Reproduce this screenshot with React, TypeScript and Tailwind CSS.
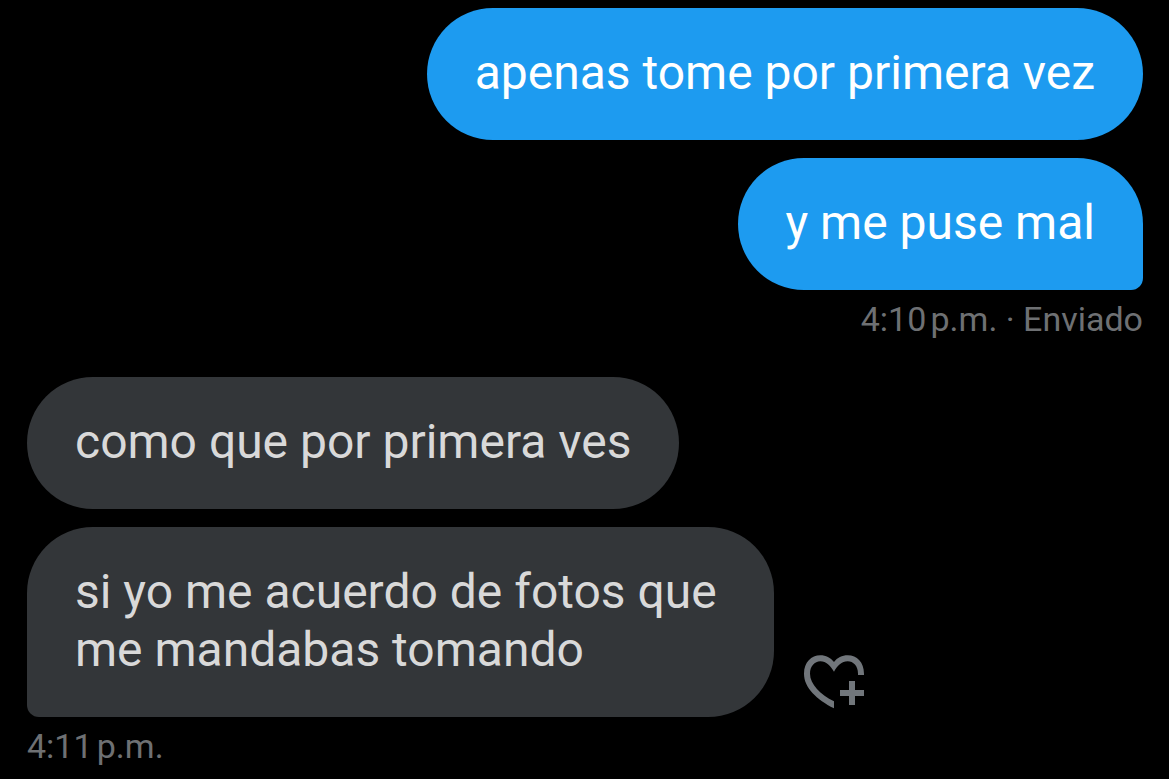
import clsx from "clsx";

const HeartPlusIcon = () => (
  <svg viewBox="42 42 180 162" className="w-[60px] h-[54px] fill-current" aria-hidden="true">
    <path d="M222 102H204V98C204 75 190 61 173 61C155 61 142 75 132 92C121 75 109 61 91 61C74 61 60 76 60 98C60 130 92 160 132 181V202C80 175 42 140 42 98C42 64 64 43 91 43C108 43 121 50 132 63C142 50 156 43 173 43C201 43 222 64 222 98Z" />
    <path d="M177 120H195V147H222V165H195V192H177V165H150V147H177Z" />
  </svg>
);

const Bubble = ({ text, sent = false, last = false }: { text: string; sent?: boolean; last?: boolean }) => (
  <p
    className={clsx(
      "max-w-[747px] rounded-[66px] px-12 pt-9 pb-[38px] text-[48px] leading-[58px]",
      sent ? "bg-[#1d9bf0] text-white" : "bg-[#333639] text-[#d9d9d9]",
      last && (sent ? "rounded-br-xl" : "rounded-bl-xl")
    )}
  >
    {text}
  </p>
);

const App = () => {
  return (
    <main className="min-h-screen bg-black pt-2 pl-[27px] pr-[26px] font-['Roboto',sans-serif]">
      <section className="flex flex-col items-end gap-[18px]">
        <Bubble sent text="apenas tome por primera vez" />
        <Bubble sent last text="y me puse mal" />
      </section>
      <p className="mt-2 text-right text-[34px] leading-[42px] text-[#6e7073]">
        {"4:10\u202fp.m. · Enviado"}
      </p>

      <section className="mt-[37px] flex flex-col items-start gap-[18px]">
        <Bubble text="como que por primera ves" />
        <div className="flex items-end gap-[30px]">
          <Bubble last text="si yo me acuerdo de fotos que me mandabas tomando" />
          <button type="button" aria-label="Reaccionar" className="mb-2 shrink-0 text-[#71767b]">
            <HeartPlusIcon />
          </button>
        </div>
      </section>
      <p className="mt-2 text-[34px] leading-[42px] text-[#6e7073]">{"4:11\u202fp.m."}</p>
    </main>
  );
};

export default App;
